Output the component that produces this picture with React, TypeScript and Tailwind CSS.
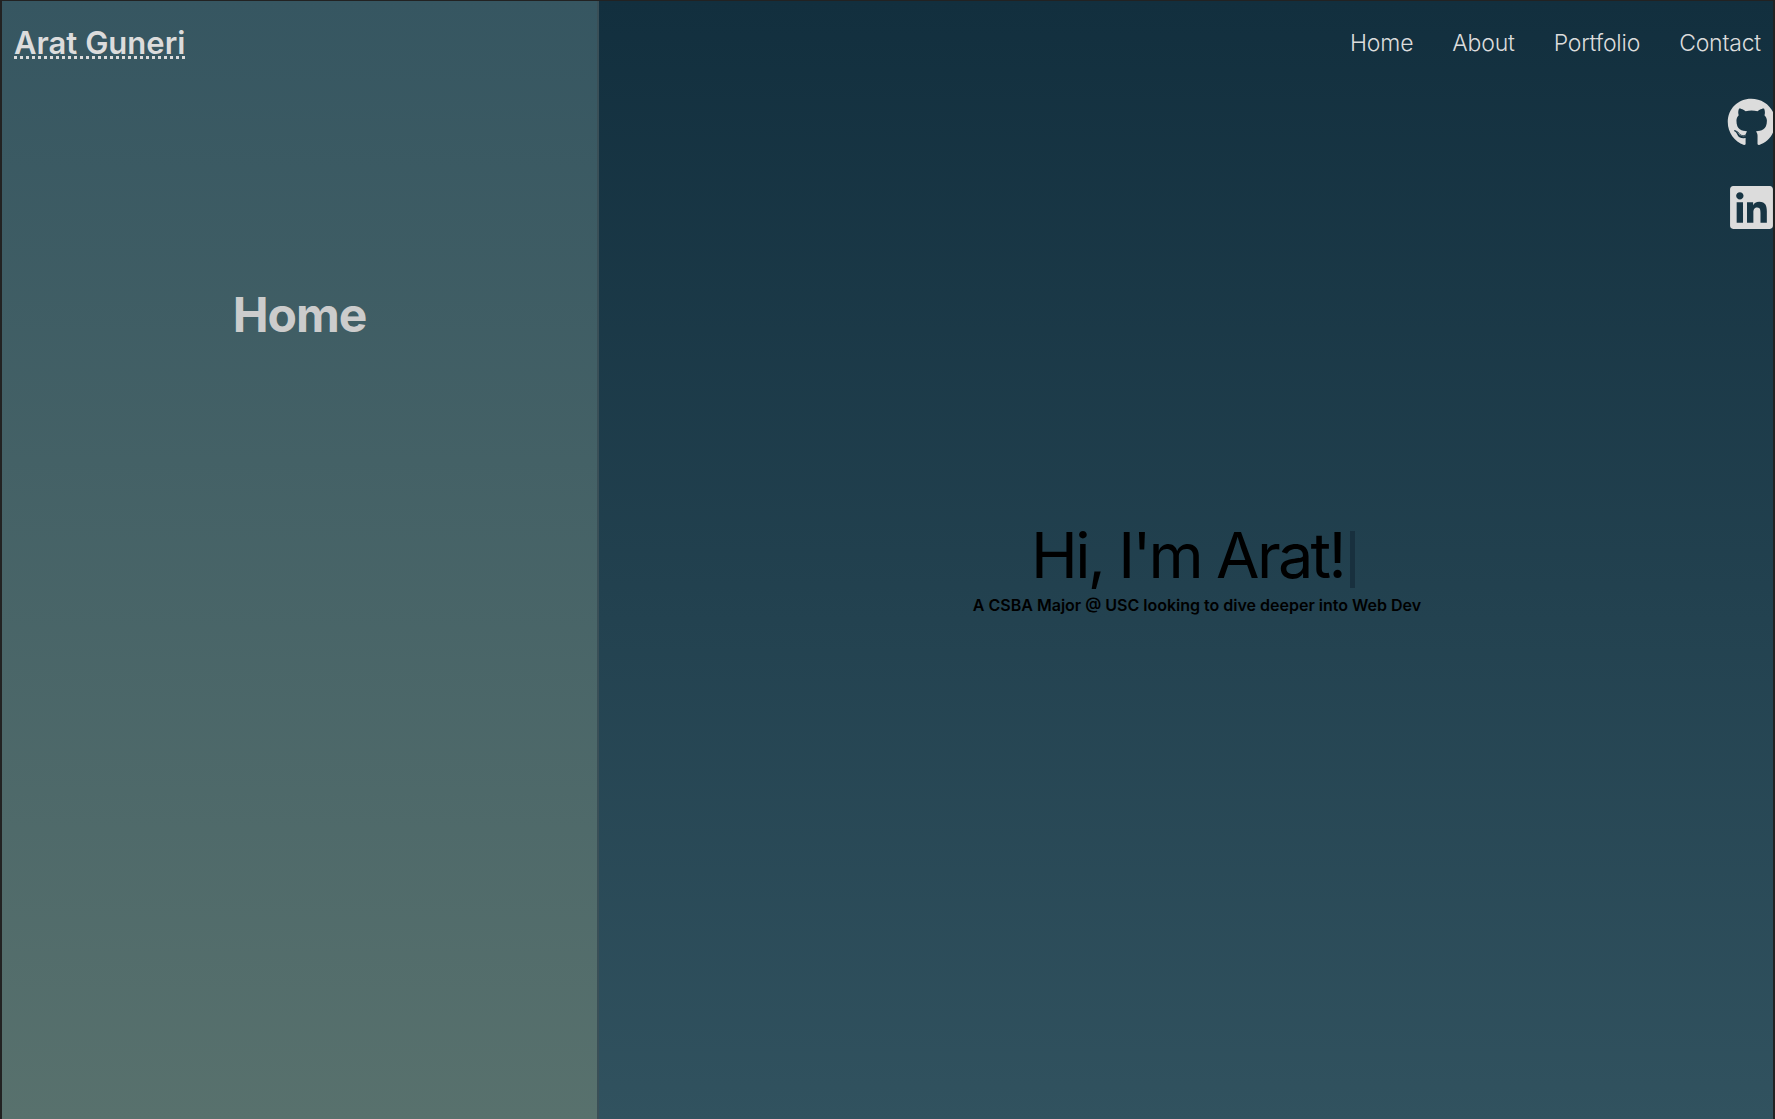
import { FaGithub, FaLinkedin } from 'react-icons/fa';

const navLinks = ['Home', 'About', 'Portfolio', 'Contact'];

function Sidebar() {
  return (
    <aside className="flex w-[597px] shrink-0 flex-col border-r-2 border-r-[#3a4f57] bg-linear-to-b from-[#365661] to-[#58716d]">
      <div className="pt-[29px] pl-[12px]">
        <a className="inline-block border-b-[3px] border-dotted border-[#dcdcdc] text-[31px] leading-[26px] font-semibold text-[#dcdcdc]">
          Arat Guneri
        </a>
      </div>
      <h1 className="mt-[226px] text-center text-[48px] leading-[58px] font-bold tracking-[-1.1px] text-[#cccccc]">Home</h1>
    </aside>
  );
}

function Nav() {
  return (
    <div className="flex flex-col items-end">
      <nav className="flex h-[85px] items-center gap-[39px] pr-[12px] pb-[2px]">
        {navLinks.map((link) => (
          <a key={link} className="text-[23px] leading-[30px] font-[350] tracking-[-0.2px] text-[#dcdcdc]">
            {link}
          </a>
        ))}
      </nav>
      <div className="mt-[12px] flex w-[44px] flex-col items-center gap-[36px] text-[#dcdcdc]">
        <FaGithub className="shrink-0 text-[49px]" />
        <FaLinkedin className="shrink-0 text-[49px]" />
      </div>
    </div>
  );
}

function Hero() {
  return (
    <div className="flex flex-col items-center justify-center pt-[15px] pl-[22px] text-black">
      <div className="mr-[8px] flex items-start">
        <h2 className="mb-[4px] text-[63px] leading-[71px] font-[375] tracking-[-2.7px]">Hi, I'm Arat!</h2>
        <span className="mt-[11px] ml-[6px] h-[57px] w-[5px] bg-[#18303e]" />
      </div>
      <p className="text-[16px] leading-[20px] font-semibold">A CSBA Major @ USC looking to dive deeper into Web Dev</p>
    </div>
  );
}

export default function App() {
  return (
    <div className="flex h-[1119px] overflow-hidden border-t-[1px] border-r-2 border-l-2 border-[#222222] bg-[#222222] font-['Inter',sans-serif]">
      <Sidebar />
      <main className="grid min-w-0 flex-1 grid-cols-1 overflow-hidden bg-linear-to-b from-[#122f3e] to-[#31525f]">
        <div className="[grid-area:1/1]">
          <Nav />
        </div>
        <div className="flex items-center justify-center [grid-area:1/1]">
          <Hero />
        </div>
      </main>
    </div>
  );
}
